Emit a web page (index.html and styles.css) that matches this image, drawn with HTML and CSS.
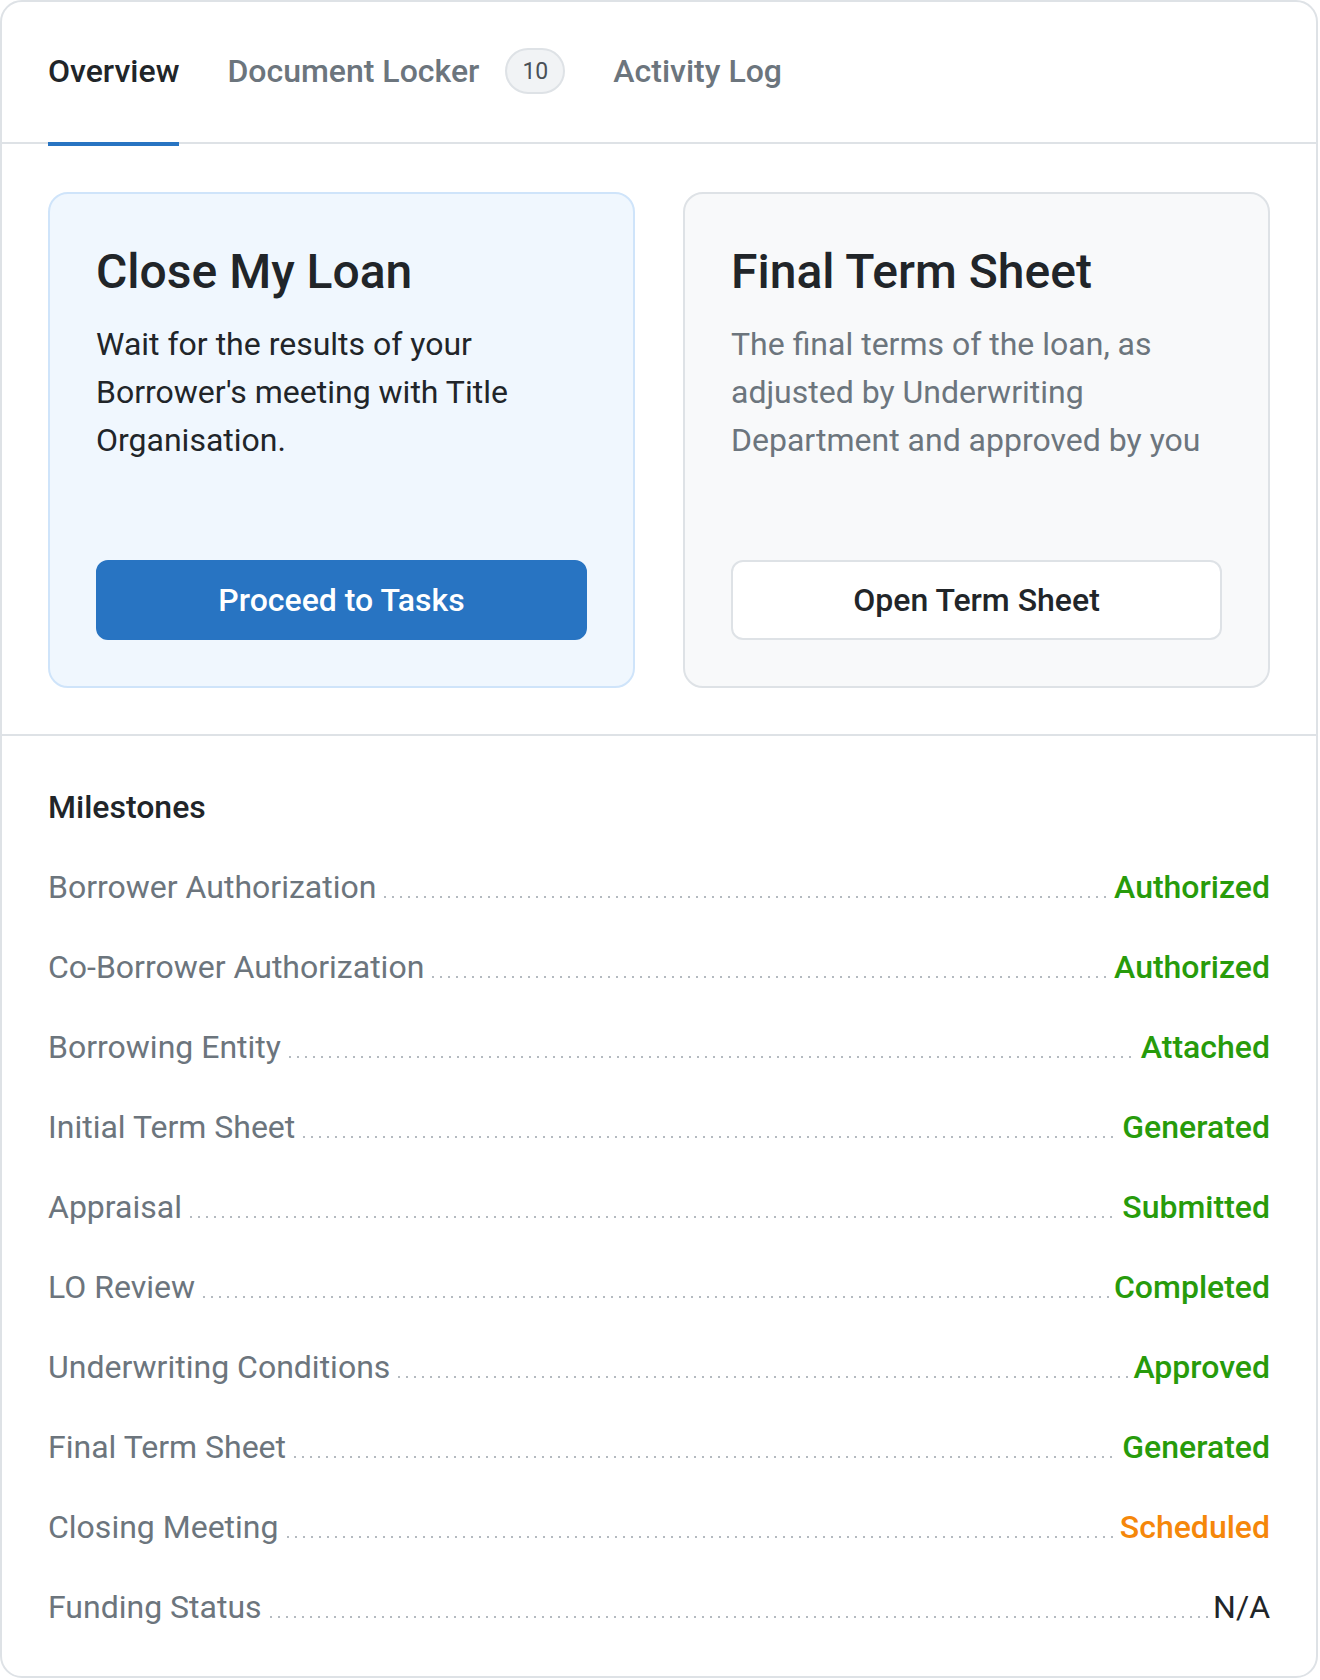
FILE: index.html
```html
<!DOCTYPE html>
<html lang="en">
<head>
<meta charset="utf-8">
<title>Loan Overview</title>
<link rel="stylesheet" href="styles.css">
</head>
<body>
<div class="panel">
  <nav class="tabs">
    <a class="tab active">Overview</a>
    <a class="tab">Document Locker <span class="badge">10</span></a>
    <a class="tab">Activity Log</a>
  </nav>

  <section class="actions">
    <div class="card card-primary">
      <h2 class="card-title">Close My Loan</h2>
      <p class="card-text">Wait for the results of your Borrower's meeting with Title Organisation.</p>
      <button class="btn btn-primary">Proceed to Tasks</button>
    </div>
    <div class="card card-muted">
      <h2 class="card-title">Final Term Sheet</h2>
      <p class="card-text muted">The final terms of the loan, as adjusted by Underwriting Department and approved by you</p>
      <button class="btn btn-outline">Open Term Sheet</button>
    </div>
  </section>

  <section class="milestones">
    <h3 class="ms-title">Milestones</h3>
    <ul class="ms-list">
      <li class="ms-row"><span class="ms-label">Borrower Authorization</span><span class="ms-dots"></span><span class="ms-status ok">Authorized</span></li>
      <li class="ms-row"><span class="ms-label">Co-Borrower Authorization</span><span class="ms-dots"></span><span class="ms-status ok">Authorized</span></li>
      <li class="ms-row"><span class="ms-label">Borrowing Entity</span><span class="ms-dots"></span><span class="ms-status ok">Attached</span></li>
      <li class="ms-row"><span class="ms-label">Initial Term Sheet</span><span class="ms-dots"></span><span class="ms-status ok">Generated</span></li>
      <li class="ms-row"><span class="ms-label">Appraisal</span><span class="ms-dots"></span><span class="ms-status ok">Submitted</span></li>
      <li class="ms-row"><span class="ms-label">LO Review</span><span class="ms-dots"></span><span class="ms-status ok">Completed</span></li>
      <li class="ms-row"><span class="ms-label">Underwriting Conditions</span><span class="ms-dots"></span><span class="ms-status ok">Approved</span></li>
      <li class="ms-row"><span class="ms-label">Final Term Sheet</span><span class="ms-dots"></span><span class="ms-status ok">Generated</span></li>
      <li class="ms-row"><span class="ms-label">Closing Meeting</span><span class="ms-dots"></span><span class="ms-status warn">Scheduled</span></li>
      <li class="ms-row"><span class="ms-label">Funding Status</span><span class="ms-dots"></span><span class="ms-status na">N/A</span></li>
    </ul>
  </section>
</div>
</body>
</html>
```

FILE: styles.css
```css
* { box-sizing: border-box; }

html, body {
  margin: 0;
  padding: 0;
  background: #ffffff;
}

body {
  font-family: Roboto, "Liberation Sans", Arial, sans-serif;
  color: #212529;
}

.panel {
  width: 1318px;
  border: 2px solid #dee2e6;
  border-radius: 22px;
  background: #ffffff;
  overflow: hidden;
}

/* Tabs */
.tabs {
  display: flex;
  align-items: stretch;
  gap: 48px;
  padding: 0 46px;
  height: 142px;
  border-bottom: 2px solid #dee2e6;
}

.tab {
  display: flex;
  align-items: center;
  height: 144px;
  margin-bottom: -2px;
  padding-bottom: 2px;
  border-bottom: 4px solid transparent;
  font-size: 32px;
  font-weight: 500;
  color: #6c757d;
  text-decoration: none;
  white-space: nowrap;
}

.tab.active {
  color: #212529;
  border-bottom-color: #2874c2;
}

.badge {
  display: inline-flex;
  align-items: center;
  justify-content: center;
  width: 60px;
  height: 46px;
  margin-left: 26px;
  border: 2px solid #dee2e6;
  border-radius: 23px;
  background: #f1f3f5;
  color: #495057;
  font-size: 23px;
  font-weight: 400;
}

/* Action cards */
.actions {
  display: grid;
  grid-template-columns: 1fr 1fr;
  gap: 48px;
  padding: 48px 46px 46px;
  border-bottom: 2px solid #dee2e6;
}

.card {
  display: flex;
  flex-direction: column;
  border: 2px solid #dee2e6;
  border-radius: 20px;
  padding: 46px;
}

.card-primary {
  background: #f0f7fe;
  border-color: #cfe4fa;
}

.card-muted {
  background: #f8f9fa;
  border-color: #dee2e6;
}

.card-title {
  margin: 0 0 16px;
  font-size: 48px;
  line-height: 64px;
  font-weight: 500;
  color: #212529;
}

.card-text {
  margin: 0;
  font-size: 32px;
  line-height: 48px;
  color: #212529;
  height: 144px;
}

.card-text.muted {
  color: #6c757d;
}

.btn {
  margin-top: 96px;
  height: 80px;
  width: 100%;
  border-radius: 12px;
  font-family: inherit;
  font-size: 32px;
  font-weight: 500;
  cursor: pointer;
}

.btn-primary {
  background: #2874c2;
  border: 2px solid #2874c2;
  color: #ffffff;
}

.btn-outline {
  background: #ffffff;
  border: 2px solid #dee2e6;
  color: #212529;
}

/* Milestones */
.milestones {
  padding: 49px 46px 29px;
}

.ms-title {
  margin: 0 0 18px;
  font-size: 32px;
  line-height: 44px;
  font-weight: 500;
  color: #212529;
}

.ms-list {
  list-style: none;
  margin: 0;
  padding: 0;
}

.ms-row {
  display: flex;
  align-items: baseline;
  height: 80px;
  padding: 16px 0;
  font-size: 32px;
  line-height: 48px;
}

.ms-label {
  color: #6c757d;
  white-space: nowrap;
}

.ms-dots {
  flex: 1;
  height: 2px;
  margin: 0 4px 0 8px;
  background-image: linear-gradient(to right, #b4bac0 2px, transparent 2px);
  background-size: 8px 2px;
  background-repeat: repeat-x;
}

.ms-status {
  font-weight: 500;
  white-space: nowrap;
}

.ms-status.ok { color: #279b0b; }
.ms-status.warn { color: #f5870a; }
.ms-status.na { color: #212529; font-weight: 400; }
```
